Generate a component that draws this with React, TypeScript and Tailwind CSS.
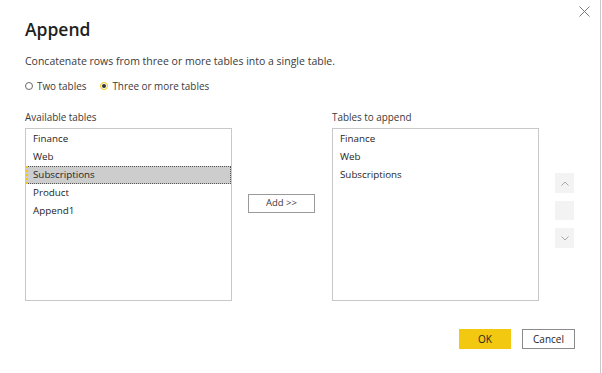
import { useState } from "react";

const available = ["Finance", "Web", "Subscriptions", "Product", "Append1"];
const toAppend = ["Finance", "Web", "Subscriptions"];

// Chevron for the reorder buttons
function Chevron({ up }: { up?: boolean }) {
    return (
        <svg width="8" height="5" viewBox="0 0 8 5" fill="none" stroke="#a9a9a9" strokeWidth="1">
            {up ? <path d="M0.5 4.5 L4 1 L7.5 4.5" /> : <path d="M0.5 0.5 L4 4 L7.5 0.5" />}
        </svg>
    );
}

export default function App() {
    const [mode, setMode] = useState<"two" | "three">("three");
    const [selected, setSelected] = useState("Subscriptions");

    return (
        <div
            className="relative w-[601px] h-[373px] bg-white border-r border-[#c9c9c9] text-[#252423]"
            style={{ fontFamily: '"Open Sans", "Liberation Sans", sans-serif' }}
        >
            {/* Close */}
            <button className="absolute top-[6px] right-[10px] w-[11px] h-[11px]">
                <svg width="11" height="11" viewBox="0 0 11 11" stroke="#7a7a7a" strokeWidth="1">
                    <path d="M0.5 0.5 L10.5 10.5 M10.5 0.5 L0.5 10.5" />
                </svg>
            </button>

            <div className="pl-[25px] pt-[16px]">
                <h1 className="h-[26px] text-[17.5px] leading-[26px] font-semibold text-[#201f1e]">Append</h1>
                <p className="mt-[11px] h-[16px] text-[10.5px] leading-[16px] text-[#3b3a39]">
                    Concatenate rows from three or more tables into a single table.
                </p>

                {/* Mode radios */}
                <div className="mt-[9px] h-[16px] flex items-center text-[9.9px] text-[#3b3a39]">
                    <label className="flex items-center cursor-pointer" onClick={() => setMode("two")}>
                        <span className="w-[8px] h-[8px] rounded-full border border-[#6b6b6b] flex items-center justify-center">
                            {mode === "two" && <span className="w-[4px] h-[4px] rounded-full bg-[#333]" />}
                        </span>
                        <span className="ml-[4px]">Two tables</span>
                    </label>
                    <label className="ml-[14px] flex items-center cursor-pointer" onClick={() => setMode("three")}>
                        <span className="w-[8px] h-[8px] rounded-full border border-[#f2c811] flex items-center justify-center">
                            {mode === "three" && <span className="w-[4px] h-[4px] rounded-full bg-[#333]" />}
                        </span>
                        <span className="ml-[4px]">Three or more tables</span>
                    </label>
                </div>

                <div className="mt-[15px] flex">
                    {/* Available tables */}
                    <div className="w-[207px]">
                        <div className="h-[16px] text-[9.9px] leading-[16px] text-[#3b3a39]">Available tables</div>
                        <div className="mt-[3px] h-[173px] border border-[#c8c8c8] pt-[1px]">
                            {available.map((t) => (
                                <div
                                    key={t}
                                    onClick={() => setSelected(t)}
                                    className={
                                        selected === t
                                            ? "h-[18px] flex items-center pl-[5px] text-[9.8px] bg-[#cdcdcd] border border-dotted border-[#555] border-l-2 border-l-[#f2c811]"
                                            : "h-[18px] flex items-center pl-[6px] text-[9.8px] border border-transparent"
                                    }
                                >
                                    {t}
                                </div>
                            ))}
                        </div>
                    </div>

                    {/* Add button */}
                    <div className="w-[100px] flex items-start">
                        <button className="ml-[16px] mt-[85px] w-[67px] h-[19px] border border-[#9a9a9a] bg-white text-[9.5px] text-[#3b3a39]">
                            Add &gt;&gt;
                        </button>
                    </div>

                    {/* Tables to append */}
                    <div className="w-[207px]">
                        <div className="h-[16px] text-[9.9px] leading-[16px] text-[#3b3a39]">Tables to append</div>
                        <div className="mt-[3px] h-[173px] border border-[#c8c8c8] pt-[1px]">
                            {toAppend.map((t) => (
                                <div key={t} className="h-[18px] flex items-center pl-[6px] text-[9.8px] border border-transparent">
                                    {t}
                                </div>
                            ))}
                        </div>
                    </div>

                    {/* Reorder */}
                    <div className="ml-[16px] pt-[64px] flex flex-col gap-[8px]">
                        <button className="w-[19px] h-[20px] bg-[#f3f3f3] flex items-center justify-center">
                            <Chevron up />
                        </button>
                        <button className="w-[19px] h-[19px] bg-[#f3f3f3]" />
                        <button className="w-[19px] h-[20px] bg-[#f3f3f3] flex items-center justify-center">
                            <Chevron />
                        </button>
                    </div>
                </div>

                {/* Footer */}
                <div className="mt-[28px] pr-[25px] flex justify-end gap-[11px]">
                    <button className="w-[52px] h-[20px] bg-[#f2c811] text-[10px] text-[#252423]">OK</button>
                    <button className="w-[53px] h-[20px] border border-[#8a8a8a] bg-white text-[10px] text-[#252423]">Cancel</button>
                </div>
            </div>
        </div>
    );
}
